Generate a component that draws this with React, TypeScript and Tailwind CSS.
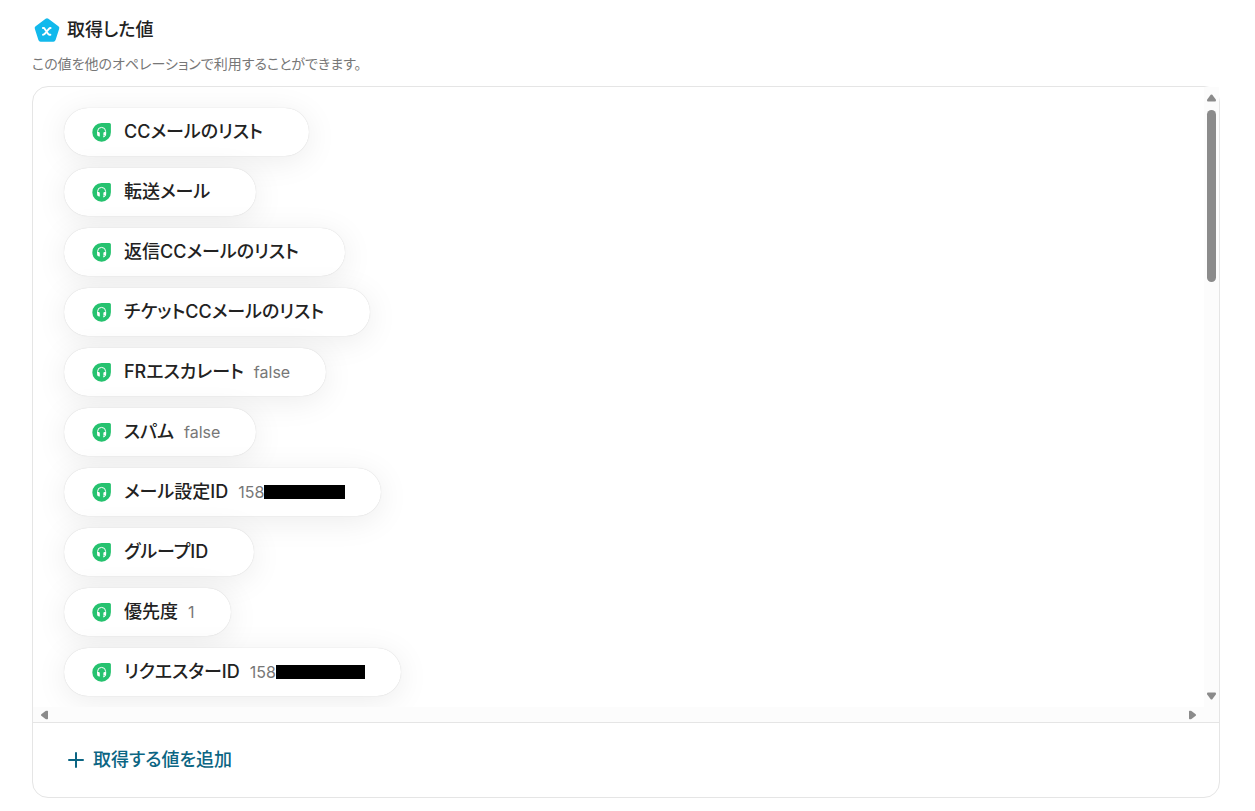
type Item = { label: string; value?: string; maskWidth?: number };

const items: Item[] = [
  { label: "CCメールのリスト" },
  { label: "転送メール" },
  { label: "返信CCメールのリスト" },
  { label: "チケットCCメールのリスト" },
  { label: "FRエスカレート", value: "false" },
  { label: "スパム", value: "false" },
  { label: "メール設定ID", value: "158", maskWidth: 81 },
  { label: "グループID" },
  { label: "優先度", value: "1" },
  { label: "リクエスターID", value: "158", maskWidth: 89 },
];

function VariableIcon() {
  return (
    <svg className="size-7 shrink-0" viewBox="0 0 28 28" aria-hidden="true">
      <path
        d="M14 4.6 24 12 20.4 23.4H7.6L4 12Z"
        fill="#12b9ec"
        stroke="#12b9ec"
        strokeWidth="4.6"
        strokeLinejoin="round"
      />
      <path
        d="M9.9 12h.5c.7 0 1 .2 1.400.9l3.200 4.900c.4.7.8.9 1.500.9h.9M17.600 12c-.8 0-1.200.2-1.700.8l-4.200 5.100c-.5.6-.9.8-1.700.8"
        fill="none"
        stroke="#fff"
        strokeWidth="1.9"
        strokeLinecap="round"
      />
    </svg>
  );
}

function HeadsetIcon() {
  return (
    <svg className="size-5 shrink-0" viewBox="0 0 20 20" aria-hidden="true">
      <path d="M9.600 1.100h7.800a1.500 1.500 0 0 1 1.500 1.500v7.600a9.300 9.300 0 1 1-9.300-9.100Z" fill="#26c26f" />
      <path
        d="M5.600 11V9.400a4 4 0 0 1 8 0V13c0 1.100-.8 1.800-2.600 1.800"
        fill="none"
        stroke="#fff"
        strokeWidth="1"
      />
      <path
        d="M5.100 10h1.500q1.200 0 1.200 1.200v3.200H7.200q-2.100 0-2.100-2ZM14.100 10h-1.500q-1.200 0-1.200 1.200v2.600h.6q2.100 0 2.100-1.800Z"
        fill="#fff"
      />
    </svg>
  );
}

function Arrow({ className }: { className: string }) {
  return (
    <svg className={className} viewBox="0 0 9 8" aria-hidden="true">
      <path d="M3.700 .8Q4.500 0 5.300 .8L8.800 5.400Q9.400 7.500 8 7.500H1Q-.4 7.500.2 5.400Z" fill="#8b8b8b" />
    </svg>
  );
}

export default function App() {
  return (
    <main className="bg-white pt-4 pr-[35px] pb-3 pl-8 font-['Inter','Noto_Sans_CJK_JP',sans-serif] text-[#222] [font-feature-settings:'palt']">
      <header>
        <h1 className="flex h-7 items-center gap-[6px] pl-px text-lg font-medium">
          <VariableIcon />
          取得した値
        </h1>
        <p className="mt-2 text-sm leading-6 text-[#777]">
          この値を他のオペレーションで利用することができます。
        </p>
      </header>

      <section className="mt-[10px] rounded-2xl border border-[#e5e5e5]">
        <div className="grid grid-cols-[minmax(0,1fr)_15px]">
          <ul className="flex flex-col items-start gap-3 overflow-hidden rounded-tl-2xl pt-[21px] pb-[11px] pl-[31px]">
            {items.map((item) => (
              <li
                key={item.label}
                className="flex h-12 items-center rounded-full bg-white pr-9 pl-7 shadow-[0_5px_32px_rgba(0,0,0,0.08),0_0_1px_rgba(0,0,0,0.2)]"
              >
                <HeadsetIcon />
                <span className="ml-3 text-lg leading-6 font-medium whitespace-nowrap">{item.label}</span>
                <span className="ml-[10px] flex items-center text-base leading-6 text-[#777]">
                  {item.value}
                  {item.maskWidth && (
                    <span className="h-[14px] bg-black" style={{ width: item.maskWidth }} />
                  )}
                </span>
              </li>
            ))}
          </ul>
          <div className="flex flex-col items-center bg-[#fcfcfc] py-[7px]" aria-hidden="true">
            <Arrow className="h-2 w-[9px]" />
            <div className="mt-2 flex-1">
              <div className="h-[172px] w-[9px] rounded-full bg-[#8b8b8b]" />
            </div>
            <Arrow className="h-2 w-[9px] rotate-180" />
          </div>
          <div className="flex h-[15px] items-center justify-between bg-[#fcfcfc] px-[7px]" aria-hidden="true">
            <Arrow className="h-2 w-[9px] -rotate-90" />
            <Arrow className="h-2 w-[9px] rotate-90" />
          </div>
          <div className="bg-[#fcfcfc]" />
        </div>
        <footer className="border-t border-[#e5e5e5] px-[35px] py-[22px]">
          <button
            type="button"
            className="flex h-[30px] cursor-pointer items-center gap-[9px] text-lg font-medium text-[#0b6583]"
          >
            <svg className="size-4" viewBox="0 0 16 16" aria-hidden="true">
              <path d="M8 1v14M1 8h14" stroke="currentColor" strokeWidth="2" strokeLinecap="round" />
            </svg>
            取得する値を追加
          </button>
        </footer>
      </section>
    </main>
  );
}
